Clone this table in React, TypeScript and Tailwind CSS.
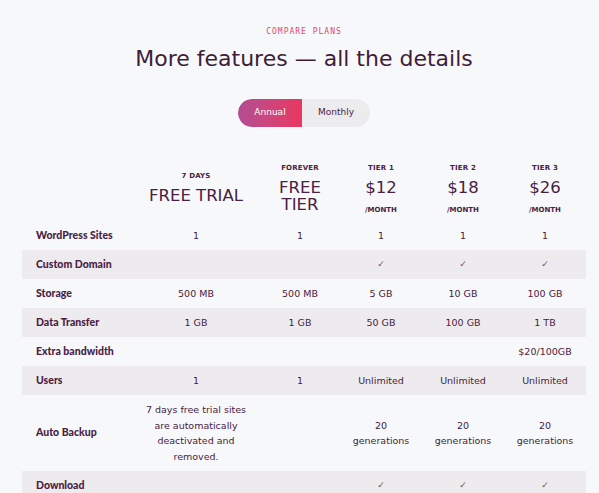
import React from "react";

type Row = {
  label: string;
  values: string[];
  shaded?: boolean;
  tall?: boolean;
};

const rows: Row[] = [
  { label: "WordPress Sites", values: ["1", "1", "1", "1", "1"] },
  { label: "Custom Domain", values: ["", "", "✓", "✓", "✓"], shaded: true },
  { label: "Storage", values: ["500 MB", "500 MB", "5 GB", "10 GB", "100 GB"] },
  { label: "Data Transfer", values: ["1 GB", "1 GB", "50 GB", "100 GB", "1 TB"], shaded: true },
  { label: "Extra bandwidth", values: ["", "", "", "", "$20/100GB"] },
  { label: "Users", values: ["1", "1", "Unlimited", "Unlimited", "Unlimited"], shaded: true },
  {
    label: "Auto Backup",
    values: [
      "7 days free trial sites\nare automatically\ndeactivated and\nremoved.",
      "",
      "20\ngenerations",
      "20\ngenerations",
      "20\ngenerations",
    ],
    tall: true,
  },
  { label: "Download", values: ["", "", "✓", "✓", "✓"], shaded: true },
];

const cols = "grid grid-cols-[110px_128px_80px_82px_82px_82px]";

function PlanHead({ top, title, sub }: { top: string; title: string[]; sub?: string }) {
  return (
    <div className="flex flex-col items-center text-center">
      <div className="text-[7px] font-bold tracking-wide">{top}</div>
      <div className="mt-[5px] text-[16.5px] leading-[17.5px] font-medium">
        {title.map((t) => (
          <div key={t}>{t}</div>
        ))}
      </div>
      {sub && <div className="mt-[9px] text-[7px] font-bold">{sub}</div>}
    </div>
  );
}

export default function App() {
  return (
    <div
      className="min-h-[493px] w-full bg-[#f7f8fa] text-[#4a2142] overflow-hidden"
      style={{ fontFamily: "'DejaVu Sans', 'Noto Sans', sans-serif" }}
    >
      <div className="ml-[22px] w-[564px]">
        <div className="pt-[26px] text-center">
          <div
            className="text-[8px] tracking-[1px] text-[#e6456c]"
            style={{ fontFamily: "'DejaVu Sans Mono', 'Liberation Mono', monospace" }}
          >
            COMPARE PLANS
          </div>
          <h1 className="mt-[7px] text-[22px] leading-[28px] text-[#3f1d38]">More features — all the details</h1>
        </div>

        <div className="mt-[26px] flex justify-center">
          <div className="flex h-[28px] w-[132px] rounded-full bg-[#ececee] text-[9px] overflow-hidden">
            <div className="flex w-[64px] items-center justify-center rounded-full rounded-r-none bg-gradient-to-r from-[#b24c92] to-[#ea3560] text-white">
              Annual
            </div>
            <div className="flex flex-1 items-center justify-center text-[#4a2142] font-medium">Monthly</div>
          </div>
        </div>

        <div className="mt-[36px]">
          <div className={`${cols} h-[58px] items-start`}>
            <div />
            <div className="pt-[8px]">
              <PlanHead top="7 DAYS" title={["FREE TRIAL"]} />
            </div>
            <PlanHead top="FOREVER" title={["FREE", "TIER"]} />
            <PlanHead top="TIER 1" title={["$12"]} sub="/MONTH" />
            <PlanHead top="TIER 2" title={["$18"]} sub="/MONTH" />
            <PlanHead top="TIER 3" title={["$26"]} sub="/MONTH" />
          </div>

          {rows.map((r) => (
            <div
              key={r.label}
              className={`${cols} items-center text-[9.5px] ${r.tall ? "h-[76px]" : "h-[29px]"} ${r.shaded ? "bg-[#eeebee]" : ""}`}
            >
              <div className="pl-[14px] text-[10.5px] font-black" style={{ fontFamily: "Lato, sans-serif" }}>
                {r.label}
              </div>
              {r.values.map((v, i) => (
                <div key={i} className="text-center leading-[15.5px]">
                  {v === "✓" ? (
                    <span className="text-[9px] text-[#6d5466]">✓</span>
                  ) : (
                    v.split("\n").map((line, j) => <div key={j}>{line}</div>)
                  )}
                </div>
              ))}
            </div>
          ))}
        </div>
      </div>
    </div>
  );
}
